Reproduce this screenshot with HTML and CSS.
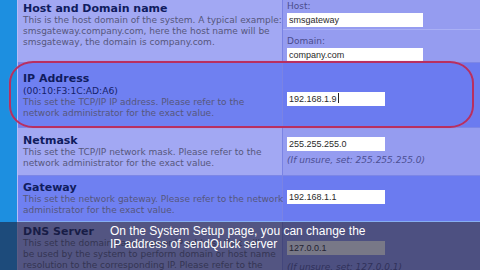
FILE: index.html
```html
<!DOCTYPE html>
<html>
<head>
<meta charset="utf-8">
<link rel="stylesheet" href="styles.css">
</head>
<body>
<div class="page">
  <div class="sidebar"></div>
  <div class="table">
    <div class="row light r1">
      <div class="label">
        <div class="title">Host and Domain name</div>
        <div class="desc">This is the host domain of the system. A typical example:<br>smsgateway.company.com, here the host name will be<br>smsgateway, the domain is company.com.</div>
      </div>
      <div class="field split">
        <div class="sub sub-host"><div class="flabel">Host:</div><div class="input wide">smsgateway</div></div>
        <div class="sub sub-domain"><div class="flabel">Domain:</div><div class="input wide">company.com</div></div>
      </div>
    </div>
    <div class="row mid r2">
      <div class="label">
        <div class="title">IP Address</div>
        <div class="mac">(00:10:F3:1C:AD:A6)</div>
        <div class="desc">This set the TCP/IP IP address. Please refer to the<br>network administrator for the exact value.</div>
      </div>
      <div class="field"><div class="input">192.168.1.9<span class="caret"></span></div></div>
    </div>
    <div class="row light r3">
      <div class="label">
        <div class="title">Netmask</div>
        <div class="desc">This set the TCP/IP network mask. Please refer to the<br>network administrator for the exact value.</div>
      </div>
      <div class="field"><div class="input">255.255.255.0</div><div class="hint">(If unsure, set: 255.255.255.0)</div></div>
    </div>
    <div class="row mid r4">
      <div class="label">
        <div class="title">Gateway</div>
        <div class="desc">This set the network gateway. Please refer to the network<br>administrator for the exact value.</div>
      </div>
      <div class="field"><div class="input">192.168.1.1</div></div>
    </div>
    <div class="row light r5">
      <div class="label">
        <div class="title">DNS Server</div>
        <div class="desc">This set the domain name server IP address that will<br>be used by the system to perform domain or host name<br>resolution to the corresponding IP. Please refer to the</div>
      </div>
      <div class="field"><div class="input">127.0.0.1</div><div class="hint">(If unsure, set: 127.0.0.1)</div></div>
    </div>
  </div>
  <div class="highlight"></div>
  <div class="overlay">
    <p class="caption">On the System Setup page, you can change the<br>IP address of sendQuick server</p>
  </div>
</div>
</body>
</html>
```

FILE: styles.css
```css
html, body {
  margin: 0;
  padding: 0;
  background: #9ea5f2;
}
.page {
  position: relative;
  width: 480px;
  height: 270px;
  overflow: hidden;
  display: flex;
  font-family: "DejaVu Sans", Verdana, sans-serif;
}
.sidebar {
  width: 17px;
  flex: none;
  background: #1d8fe0;
  border-right: 1px solid #b6bcf7;
}
.table {
  flex: 1;
  display: flex;
  flex-direction: column;
}
.row {
  display: flex;
  box-sizing: border-box;
  border-bottom: 1px solid #7c86e6;
  overflow: hidden;
  flex: none;
}
.row.light .label { background: #a2a8f3; }
.row.light .field { background: #959cf0; }
.row.mid .label { background: #6f80f1; }
.row.mid .field { background: #6b7bf0; }
.label {
  width: 265px;
  flex: none;
  box-sizing: border-box;
  padding-left: 5px;
  border-right: 1px solid #7a83e4;
}
.field {
  flex: 1;
  box-sizing: border-box;
  padding-left: 4px;
}
.title {
  font-weight: bold;
  font-size: 11px;
  line-height: 13px;
  color: #101c5e;
  white-space: nowrap;
}
.mac {
  font-size: 9.2px;
  line-height: 12px;
  color: #14206a;
  white-space: nowrap;
}
.desc {
  font-size: 9px;
  line-height: 11px;
  color: #56577c;
  white-space: nowrap;
}
.input {
  width: 98px;
  height: 14px;
  box-sizing: border-box;
  background: #ffffff;
  font-family: "Liberation Sans", Arial, sans-serif;
  font-size: 9px;
  line-height: 14px;
  padding-left: 2px;
  color: #2a2a2a;
  white-space: nowrap;
}
.input.wide { width: 136px; }
.caret {
  display: inline-block;
  width: 1px;
  height: 10px;
  background: #222;
  vertical-align: -1px;
  margin-left: 1px;
}
.hint {
  font-size: 9px;
  line-height: 11px;
  font-style: italic;
  color: #4c4f92;
  white-space: nowrap;
  margin-top: 4px;
}
.flabel {
  font-size: 9px;
  line-height: 11px;
  color: #4b4d8c;
}
.split {
  padding-left: 0;
  display: flex;
  flex-direction: column;
}
.sub {
  padding-left: 4px;
}
.sub-host {
  height: 31px;
  box-sizing: border-box;
  padding-top: 1px;
  border-bottom: 1px solid #aab0f5;
}
.sub-host .input, .sub-domain .input { margin-top: 1px; }
.sub-domain { padding-top: 6px; }

.r1 { height: 63px; }
.r1 .label { padding-top: 2px; }
.r2 { height: 65px; }
.r2 .label { padding-top: 9px; }
.r2 .field { padding-top: 29px; }
.r3 { height: 48px; }
.r3 .label { padding-top: 6px; }
.r3 .field { padding-top: 9px; }
.r4 { height: 46px; border-bottom-color: #86aef2; }
.r4 .label { padding-top: 5px; }
.r4 .field { padding-top: 14px; }
.r5 { height: 60px; border-bottom: none; }
.r5 .label { padding-top: 3px; }
.r5 .field { padding-top: 19px; }
.r5 .hint { margin-top: 7px; }

.highlight {
  position: absolute;
  left: 9px;
  top: 61px;
  width: 465px;
  height: 67px;
  box-sizing: border-box;
  border: 2px solid #b82f60;
  border-radius: 24px / 22px;
  box-shadow: 0 0 1px #d87098;
}
.overlay {
  position: absolute;
  left: 0;
  right: 0;
  top: 222px;
  bottom: 0;
  background: rgba(30, 30, 55, 0.6);
}
.caption {
  margin: 0;
  position: absolute;
  left: 110px;
  top: 3px;
  font-family: "Liberation Sans", Arial, sans-serif;
  font-size: 12px;
  line-height: 13px;
  color: #ffffff;
  white-space: nowrap;
}
```
